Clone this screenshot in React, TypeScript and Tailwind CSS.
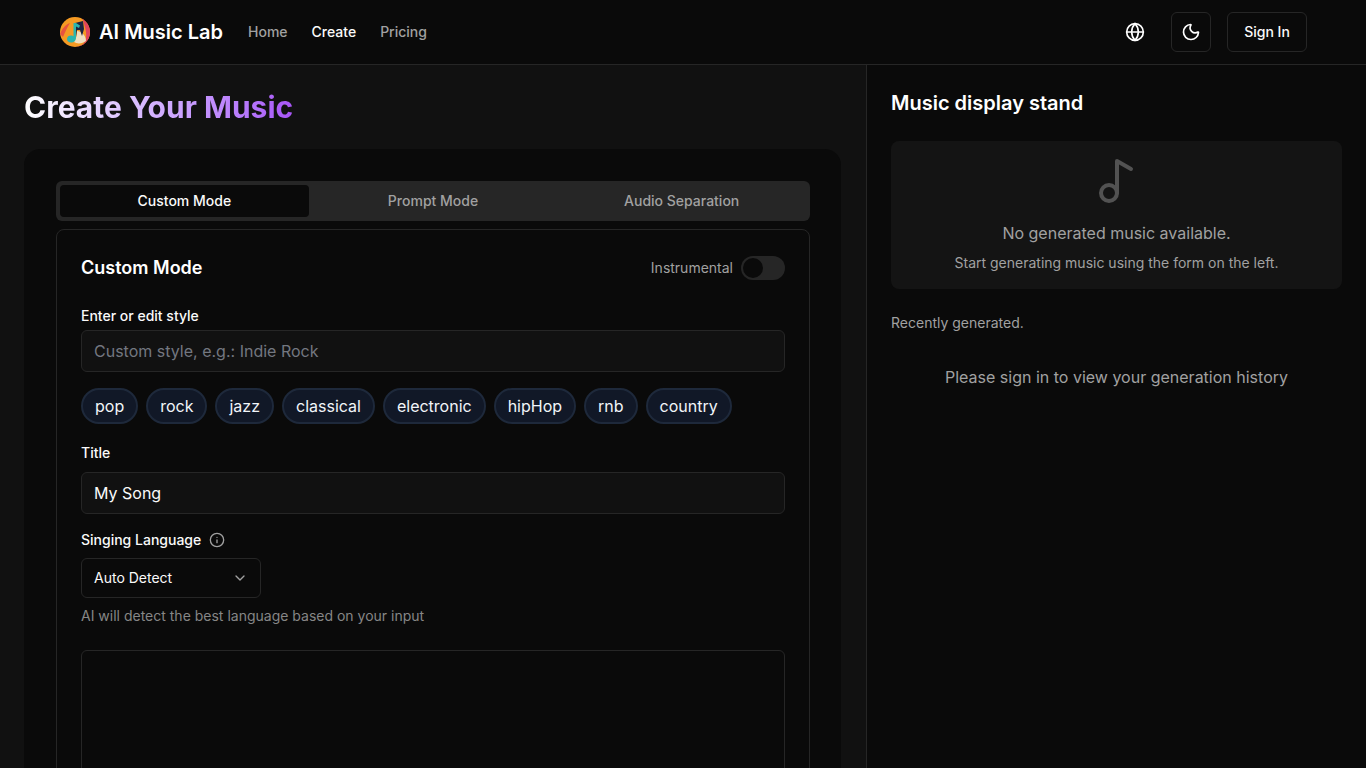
import { Globe, Moon, Music2, Info, ChevronDown } from 'lucide-react';

const genres = ['pop', 'rock', 'jazz', 'classical', 'electronic', 'hipHop', 'rnb', 'country'];

const Logo = () => (
  <svg width="30" height="30" viewBox="0 0 30 30" className="shrink-0">
    <defs>
      <clipPath id="logo-clip">
        <circle cx="15" cy="15" r="15" />
      </clipPath>
    </defs>
    <g clipPath="url(#logo-clip)">
      <rect width="30" height="30" fill="#f59a23" />
      <path d="M22 0H30V30H16C21 29 25 27 26 21 27 14 24 7 22 0Z" fill="#e2445c" />
      <path d="M0 17C2 12 5 8 10 6 7 11 5 15 3 20Z" fill="#e8533f" />
      <path d="M17 14C21 14 26 18 26 24 22 27 17 27 14 25 16 22 17 18 17 14Z" fill="#f0dfc0" />
      <path d="M15 6 23 4 24 12 22 19 20 13 17 13 16 20 15 20Z" fill="#1c2340" />
      <path d="M13.5 6H16L20 8.5 19 11 16 9.5V20.5C16 23.5 14 25.5 11 25.5 8.5 25.5 7 24 7 22 7 19.5 9 18.5 11 18.5 12 18.5 13 18.8 13.5 19.2Z" fill="#2bb5ad" />
    </g>
  </svg>
);

export default function App() {
  return (
    <div className="h-screen overflow-hidden bg-[#0a0a0a] text-white font-['Inter',sans-serif]">
      <header className="h-[65px] border-b border-[#262626] flex items-center justify-between pl-[60px] pr-[59px]">
        <div className="flex items-center">
          <Logo />
          <span className="ml-[9px] text-xl font-semibold">AI Music Lab</span>
          <nav className="ml-[25px] flex gap-6 text-sm font-medium">
            <a className="text-[#a1a1a1]">Home</a>
            <a className="text-[#fafafa]">Create</a>
            <a className="text-[#a1a1a1]">Pricing</a>
          </nav>
        </div>
        <div className="flex items-center">
          <Globe className="w-5 h-5 text-white" strokeWidth={2} />
          <button className="ml-[26px] w-10 h-10 rounded-md border border-[#262626] flex items-center justify-center">
            <Moon className="w-5 h-5 text-white" strokeWidth={2} />
          </button>
          <button className="ml-4 w-20 h-10 rounded-md border border-[#262626] text-sm font-medium text-[#fafafa]">
            Sign In
          </button>
        </div>
      </header>

      <div className="flex h-[703px]">
        <main className="w-[867px] shrink-0 border-r border-[#262626] bg-[#111111] pt-6 px-6">
          <h1 className="text-3xl font-bold leading-9 w-fit bg-gradient-to-r from-white to-[#a855f7] bg-clip-text text-transparent">
            Create Your Music
          </h1>
          <div className="mt-[24px] w-[817px] rounded-2xl bg-[#0a0a0a] p-8">
            <div className="w-[754px] h-10 rounded-md bg-[#262626] p-1 flex text-sm font-medium">
              <div className="flex-1 rounded-sm bg-[#0a0a0a] text-[#fafafa] flex items-center justify-center">Custom Mode</div>
              <div className="flex-1 text-[#a1a1a1] flex items-center justify-center">Prompt Mode</div>
              <div className="flex-1 text-[#a1a1a1] flex items-center justify-center">Audio Separation</div>
            </div>

            <section className="mt-2 w-[754px] h-[700px] rounded-lg border border-[#262626] p-6">
              <div className="flex items-center justify-between h-6 mt-[2px]">
                <h2 className="text-lg font-semibold">Custom Mode</h2>
                <div className="flex items-center gap-2">
                  <span className="text-sm text-[#a1a1a1]">Instrumental</span>
                  <span className="w-11 h-6 rounded-full bg-[#262626] flex items-center p-[2px]">
                    <span className="w-5 h-5 rounded-full bg-[#0a0a0a]" />
                  </span>
                </div>
              </div>

              <label className="block mt-[26px] text-sm font-medium leading-5 text-[#fafafa]">Enter or edit style</label>
              <div className="mt-1 h-[42px] rounded-md border border-[#262626] bg-[#111111] px-3 flex items-center text-base text-[#737780] [font-feature-settings:'calt'_0]">
                Custom style, e.g.: Indie Rock
              </div>

              <div className="mt-4 flex gap-2">
                {genres.map((g) => (
                  <span key={g} className="h-9 px-3 rounded-full border-2 border-[#1e293b] bg-[#111827] text-base text-[#f1f5f9] flex items-center">
                    {g}
                  </span>
                ))}
              </div>

              <label className="block mt-[19px] text-sm font-medium leading-5 text-[#fafafa]">Title</label>
              <div className="mt-[9px] h-[42px] rounded-md border border-[#262626] bg-[#111111] px-3 flex items-center text-base text-[#fafafa]">
                My Song
              </div>

              <div className="mt-4 flex items-center gap-2 h-5">
                <label className="text-sm font-medium text-[#fafafa]">Singing Language</label>
                <Info className="w-4 h-4 text-[#a1a1a1]" strokeWidth={2} />
              </div>
              <div className="mt-2 w-[180px] h-10 rounded-md border border-[#262626] px-3 flex items-center justify-between text-sm text-[#fafafa]">
                Auto Detect
                <ChevronDown className="w-4 h-4 text-[#a1a1a1]" strokeWidth={2} />
              </div>
              <p className="mt-2 text-sm leading-5 text-[#868686]">AI will detect the best language based on your input</p>

              <div className="mt-6 h-[300px] rounded-md border border-[#262626]" />
            </section>
          </div>
        </main>

        <aside className="flex-1 px-6 pt-6">
          <h2 className="text-xl font-semibold leading-7">Music display stand</h2>
          <div className="mt-6 h-[148px] rounded-lg bg-[#141414] flex flex-col items-center pt-4">
            <Music2 className="w-12 h-12 text-[#525252]" strokeWidth={2} />
            <p className="mt-4 text-base leading-6 text-[#a1a1a1]">No generated music available.</p>
            <p className="mt-2 text-sm leading-5 text-[#a1a1a1]">Start generating music using the form on the left.</p>
          </div>
          <p className="mt-6 text-sm leading-5 text-[#a1a1a1]">Recently generated.</p>
          <p className="mt-8 text-center text-base leading-6 text-[#a1a1a1]">Please sign in to view your generation history</p>
        </aside>
      </div>
    </div>
  );
}
